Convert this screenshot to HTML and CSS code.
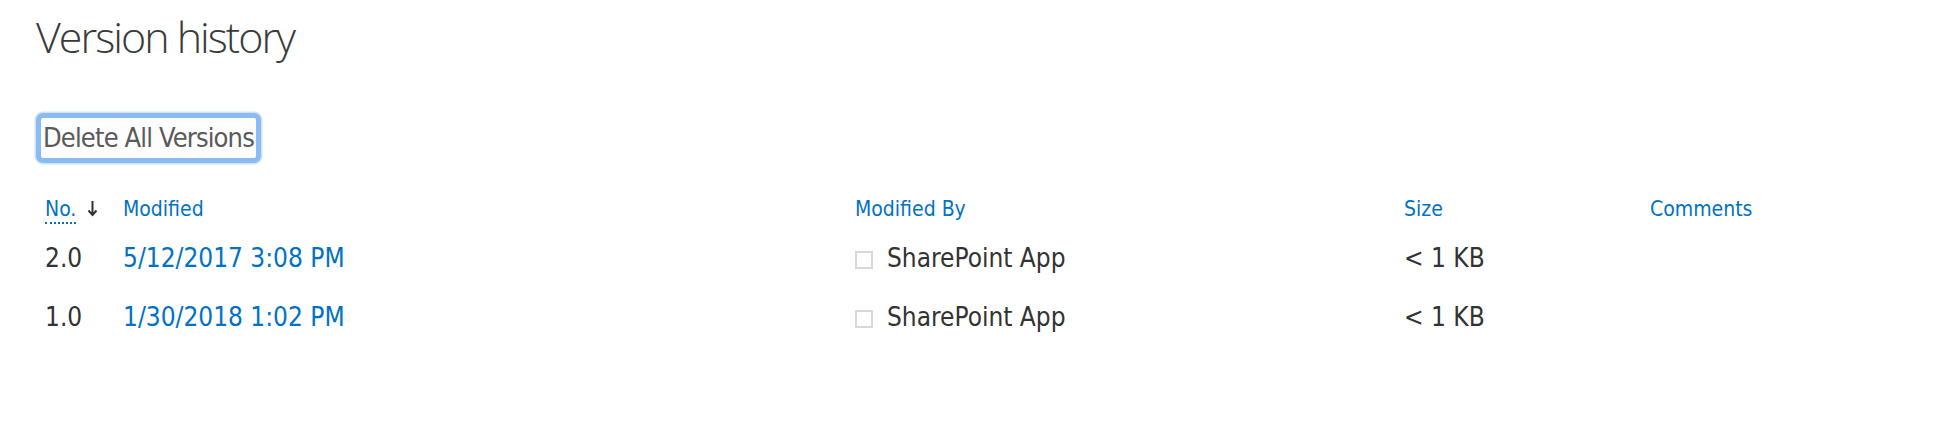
FILE: index.html
```html
<!DOCTYPE html>
<html lang="en">
<head>
  <meta charset="UTF-8" />
  <title>Version history</title>
  <link rel="stylesheet" href="styles.css">
</head>
<body>
  <h1>Version history</h1>

  <button type="button" class="delete-btn">Delete All Versions</button>

  <div class="versions">
    <div class="row head">
      <div><a class="sort" href="#">No.</a><svg class="sort-arrow" width="11" height="17" viewBox="0 0 11 17"><path d="M5.5 1v14M1.5 10.5l4 4.5 4-4.5" fill="none" stroke="#333" stroke-width="2"/></svg></div>
      <div><a href="#">Modified</a></div>
      <div><a href="#">Modified By</a></div>
      <div><a href="#">Size</a></div>
      <div><a href="#">Comments</a></div>
    </div>
    <div class="row">
      <div>2.0</div>
      <div><a href="#">5/12/2017 3:08 PM</a></div>
      <div class="user"><span class="presence"></span><span>SharePoint App</span></div>
      <div>&lt; 1 KB</div>
      <div></div>
    </div>
    <div class="row">
      <div>1.0</div>
      <div><a href="#">1/30/2018 1:02 PM</a></div>
      <div class="user"><span class="presence"></span><span>SharePoint App</span></div>
      <div>&lt; 1 KB</div>
      <div></div>
    </div>
  </div>
</body>
</html>
```

FILE: styles.css
```css
:root {
  --link: #0072c6;
  --text: #333;
  --ui-font: "DejaVu Sans Condensed", "DejaVu Sans", sans-serif;
}
body {
  margin: 0;
  padding: 15px 0 0 36px;
  background: #fff;
  color: var(--text);
  font-family: var(--ui-font);
}
h1 {
  margin: 0;
  font-family: "Open Sans", sans-serif;
  font-weight: 300;
  font-size: 43px;
  line-height: 44px;
  letter-spacing: -2px;
  color: #3a3a3a;
}
.delete-btn {
  display: block;
  margin-top: 54px;
  height: 50px;
  padding: 0 2px;
  font-family: var(--ui-font);
  font-size: 27px;
  line-height: 40px;
  letter-spacing: -0.85px;
  color: #5a5a5a;
  background: #fdfdfd;
  border: 5px solid #8abbf3;
  border-radius: 7px;
  box-shadow: 0 0 0 1.5px #d0e3fb;
}
.versions { margin: 31px 0 0 9px; }
.row {
  display: grid;
  grid-template-columns: 78px 732px 549px 246px 1fr;
  font-size: 26px;
  line-height: 59px;
  height: 59px;
}
.row.head {
  font-size: 21px;
  line-height: 30px;
  height: 30px;
  margin-bottom: 5px;
}
a { color: var(--link); text-decoration: none; }
.sort {
  border-bottom: 2px dotted var(--link);
  padding-bottom: 1px;
}
.sort-arrow { margin-left: 11px; vertical-align: -1px; }
.user { display: flex; align-items: center; gap: 14px; }
.presence {
  flex: none;
  width: 14px;
  height: 14px;
  margin-top: 2px;
  border: 2px solid #d8d8d8;
  background: #fff;
}
```
